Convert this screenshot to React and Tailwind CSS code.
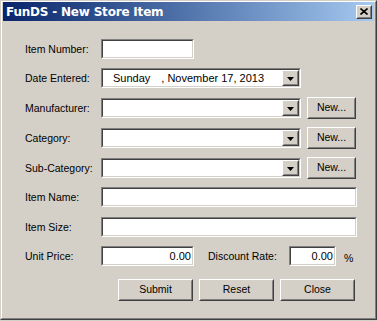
import React from "react";

const Sunken = ({ className = "", inner = "", children }) => (
  <div className={"border border-t-[#808080] border-l-[#808080] border-b-white border-r-white " + className}>
    <div className={"h-full border border-t-[#404040] border-l-[#404040] border-b-[#d4d0c8] border-r-[#d4d0c8] bg-white " + inner}>
      {children}
    </div>
  </div>
);

const Raised = ({ className = "", inner = "", children }) => (
  <div className={"border border-t-white border-l-white border-b-[#404040] border-r-[#404040] bg-[#d4d0c8] " + className}>
    <div className={"h-full border border-t-[#d4d0c8] border-l-[#d4d0c8] border-b-[#808080] border-r-[#808080] flex items-center justify-center " + inner}>
      {children}
    </div>
  </div>
);

const Arrow = () => (
  <svg width="7" height="4" viewBox="0 0 7 4" className="block">
    <polygon points="0,0 7,0 3.5,4" fill="#000" />
  </svg>
);

const Combo = ({ children }) => (
  <Sunken className="w-[200px] h-[20px]" inner="flex">
    <div className="flex-1 flex items-center pl-[1px] whitespace-nowrap text-[11px]">{children}</div>
    <Raised className="w-[17px] h-full" inner="pt-[1px]">
      <Arrow />
    </Raised>
  </Sunken>
);

const Label = ({ children, w = "w-[76px]" }) => (
  <div className={"shrink-0 leading-none pt-[1px] " + w}>{children}</div>
);

const NewBtn = () => (
  <Raised className="ml-[6px] w-[49px] h-[22px]">New...</Raised>
);

export default function App() {
  return (
    <div className="w-[378px] h-[321px] bg-[#d4d0c8] overflow-hidden text-[10.5px] text-black font-['Liberation_Sans',Arial,sans-serif]">
      <div className="w-[377px] h-[320px] border border-t-[#d4d0c8] border-l-[#d4d0c8] border-b-[#404040] border-r-[#404040]">
        <div className="h-full border border-t-white border-l-white border-b-[#808080] border-r-[#808080] px-[1px]">
          <div className="h-[19px] flex items-center bg-linear-to-r from-[#0a246a] to-[#a6caf0]">
            <div className="flex-1 pl-[3px] font-bold text-white leading-none text-[12px] font-['DejaVu_Sans',Verdana,sans-serif] tracking-[-0.2px]">
              FunDS - New Store Item
            </div>
            <Raised className="w-[16px] h-[14px] mr-[2px]">
              <svg width="8" height="7" viewBox="0 0 8 7" className="block">
                <path d="M0.5 0.5 L7.5 6.5 M7.5 0.5 L0.5 6.5" stroke="#000" strokeWidth="1.6" />
              </svg>
            </Raised>
          </div>

          <div className="flex flex-col pl-[22px]">
            <div className="flex items-center h-[20px] mt-[18px]">
              <Label>Item Number:</Label>
              <Sunken className="w-[93px] h-[20px]" />
            </div>

            <div className="flex items-center h-[20px] mt-[9px]">
              <Label>Date Entered:</Label>
              <Combo>
                <span className="pl-[9px]">Sunday</span>
                <span className="pl-[11px]">, November 17, 2013</span>
              </Combo>
            </div>

            <div className="flex items-center h-[20px] mt-[10px]">
              <Label>Manufacturer:</Label>
              <Combo />
              <NewBtn />
            </div>

            <div className="flex items-center h-[20px] mt-[10px]">
              <Label>Category:</Label>
              <Combo />
              <NewBtn />
            </div>

            <div className="flex items-center h-[20px] mt-[10px]">
              <Label>Sub-Category:</Label>
              <Combo />
              <NewBtn />
            </div>

            <div className="flex items-center h-[20px] mt-[9px]">
              <Label>Item Name:</Label>
              <Sunken className="w-[256px] h-[20px]" />
            </div>

            <div className="flex items-center h-[20px] mt-[10px]">
              <Label>Item Size:</Label>
              <Sunken className="w-[256px] h-[20px]" />
            </div>

            <div className="flex items-center h-[20px] mt-[9px]">
              <Label>Unit Price:</Label>
              <Sunken className="w-[93px] h-[20px]" inner="flex items-center justify-end pr-[1px] text-[11px]">
                0.00
              </Sunken>
              <div className="ml-[14px]">
                <Label w="w-[81px]">Discount Rate:</Label>
              </div>
              <Sunken className="w-[47px] h-[20px]" inner="flex items-center justify-end pr-[1px] text-[11px]">
                0.00
              </Sunken>
              <div className="ml-[8px] mt-[5px] leading-none">%</div>
            </div>

            <div className="flex h-[22px] mt-[13px] pl-[93px] gap-[6px]">
              <Raised className="w-[75px] h-[22px]">Submit</Raised>
              <Raised className="w-[75px] h-[22px]">Reset</Raised>
              <Raised className="w-[75px] h-[22px]">Close</Raised>
            </div>
          </div>
        </div>
      </div>
    </div>
  );
}
